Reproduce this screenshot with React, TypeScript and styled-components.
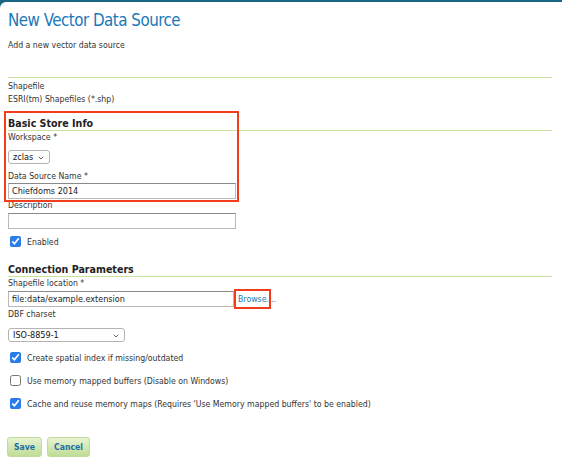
import styled, { createGlobalStyle } from 'styled-components';
import { ChevronDown } from 'lucide-react';

const GlobalStyle = createGlobalStyle`
  html, body {
    margin: 0;
    padding: 0;
    background: #1a6585;
  }
  body {
    font-family: 'DejaVu Sans Condensed', 'DejaVu Sans', sans-serif;
    font-size: 8.7px;
    color: #333;
  }
`;

const Page = styled.div`
  margin-top: 2px;
  min-height: 459px;
  background: #fff;
  border-top-left-radius: 6px;
  padding: 0 10px 0 8px;
  box-sizing: border-box;
`;

const Title = styled.h1`
  margin: 0;
  padding-top: 6px;
  font-size: 16.8px;
  line-height: 24px;
  letter-spacing: -0.5px;
  font-weight: normal;
  color: #1b79b8;
`;

const Text = styled.div<{ $top?: number }>`
  margin-top: ${({ $top }) => $top ?? 0}px;
  line-height: 13px;
  white-space: nowrap;
`;

const Rule = styled.div`
  margin-top: 25px;
  border-top: 1px solid #c7e19f;
`;

const Section = styled.div`
  position: relative;
`;

const Highlight = styled.div`
  position: absolute;
  left: -4px;
  top: -6px;
  width: 231px;
  height: 87px;
  border: 2px solid #f23d1c;
  pointer-events: none;
`;

const Heading = styled.h3<{ $top: number }>`
  margin: ${({ $top }) => $top}px 0 0;
  font-size: 10.6px;
  line-height: 13px;
  font-weight: bold;
  color: #222;
  border-bottom: 1px solid #c7e19f;
`;

const SelectBox = styled.div<{ $width: number; $top: number }>`
  position: relative;
  width: ${({ $width }) => $width}px;
  height: 14px;
  margin-top: ${({ $top }) => $top}px;
  box-sizing: border-box;
  border: 1px solid #b4b4b4;
  border-radius: 3px;
  background: #fff;
  font-size: 9px;
  line-height: 12px;
  padding-left: 4px;
  color: #111;

  svg {
    position: absolute;
    right: 4px;
    top: 3px;
  }
`;

const TextInput = styled.input<{ $width: number; $top?: number }>`
  display: block;
  width: ${({ $width }) => $width}px;
  height: 16px;
  margin: ${({ $top }) => $top ?? 0}px 0 0;
  box-sizing: border-box;
  border: 1px solid #b9b9b9;
  border-top-color: #8a8a8a;
  padding: 0 3px;
  font-family: inherit;
  font-size: 9px;
  color: #222;
  outline: none;
`;

const InputRow = styled.div`
  display: flex;
  align-items: center;
  height: 16px;
  margin-top: 1px;
`;

const BrowseLink = styled.a`
  color: #1c7bb0;
  text-decoration: none;
  font-size: 8.7px;
  white-space: nowrap;
`;

const Boxed = styled.span`
  display: inline-block;
  border: 2px solid #f23d1c;
  padding: 3px 0 3px 2px;
  line-height: 10px;
`;

const CheckRow = styled.label<{ $top: number }>`
  display: flex;
  align-items: center;
  gap: 6px;
  margin-top: ${({ $top }) => $top}px;
  padding-left: 2px;
  height: 13px;
  white-space: nowrap;

  input {
    width: 11px;
    height: 11px;
    margin: 0;
    accent-color: #2a7de8;
  }
`;

const Buttons = styled.div`
  display: flex;
  gap: 5px;
  margin-top: 27px;
  margin-left: -1px;
`;

const Button = styled.button`
  height: 20px;
  padding: 0 6px;
  border: 1px solid #c0dc97;
  border-radius: 3px;
  background: linear-gradient(#e6f3d2, #bfdd95);
  color: #1e6fa8;
  font-family: inherit;
  font-size: 8.6px;
  font-weight: bold;
`;

const checks = [
  { label: 'Create spatial index if missing/outdated', checked: true, top: 9 },
  { label: 'Use memory mapped buffers (Disable on Windows)', checked: false, top: 10 },
  {
    label: "Cache and reuse memory maps (Requires 'Use Memory mapped buffers' to be enabled)",
    checked: true,
    top: 10,
  },
];

const App = () => {
  return (
    <>
      <GlobalStyle />
      <Page>
        <Title>New Vector Data Source</Title>
        <Text $top={7}>Add a new vector data source</Text>
        <Rule />
        <Text $top={2}>Shapefile</Text>
        <Text>ESRI(tm) Shapefiles (*.shp)</Text>

        <Section>
          <Heading $top={11}>Basic Store Info</Heading>
          <Text>Workspace *</Text>
          <SelectBox $width={42} $top={6}>
            zclas
            <ChevronDown size={8} strokeWidth={2} />
          </SelectBox>
          <Text $top={6}>Data Source Name *</Text>
          <TextInput $width={228} defaultValue="Chiefdoms 2014" />
          <Highlight />
        </Section>
        <Text>Description</Text>
        <TextInput $width={228} $top={1} defaultValue="" />
        <CheckRow $top={6}>
          <input type="checkbox" defaultChecked />
          Enabled
        </CheckRow>

        <Heading $top={15}>Connection Parameters</Heading>
        <Text>Shapefile location *</Text>
        <InputRow>
          <TextInput $width={226} defaultValue="file:data/example.extension" />
          <BrowseLink href="#">
            <Boxed>Browse.</Boxed>..
          </BrowseLink>
        </InputRow>
        <Text $top={1}>DBF charset</Text>
        <SelectBox $width={117} $top={7}>
          ISO-8859-1
          <ChevronDown size={8} strokeWidth={2} />
        </SelectBox>

        {checks.map((c) => (
          <CheckRow key={c.label} $top={c.top}>
            <input type="checkbox" defaultChecked={c.checked} />
            {c.label}
          </CheckRow>
        ))}

        <Buttons>
          <Button>Save</Button>
          <Button>Cancel</Button>
        </Buttons>
      </Page>
    </>
  );
};

export default App;
